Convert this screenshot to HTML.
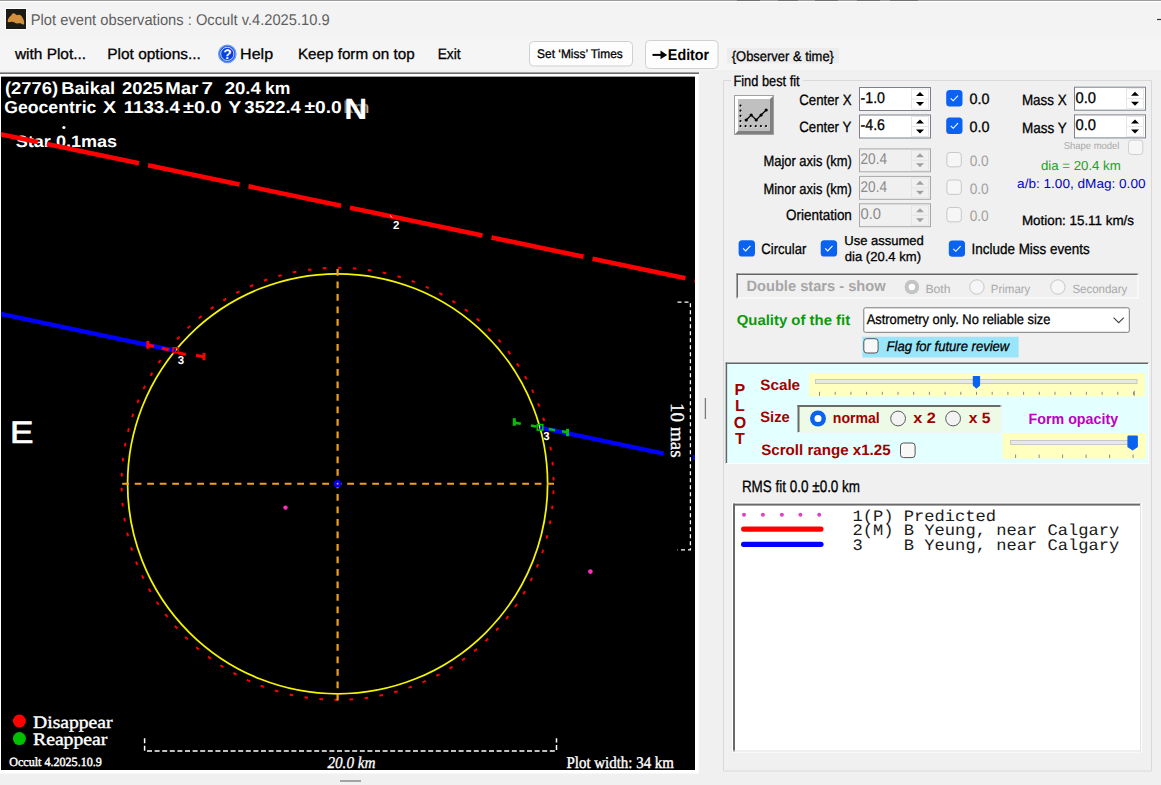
<!DOCTYPE html><html><head><meta charset="utf-8"><title>Plot event observations</title>
<style>html,body{margin:0;padding:0;background:#f0f0f0;overflow:hidden}svg{display:block}text{white-space:pre}</style></head><body>
<svg width="1161" height="785" viewBox="0 0 1161 785" text-rendering="geometricPrecision">
<rect x="0" y="0" width="1161" height="785" fill="#f0f0f0" />
<rect x="0" y="0" width="1161" height="39" fill="#f3f3f3" />
<line x1="0" y1="0.5" x2="1161" y2="0.5" stroke="#9c9c9c" stroke-width="1" />
<rect x="0" y="1" width="1161" height="1" fill="#ffffff" />
<rect x="737" y="0" width="23" height="1" fill="#707070" />
<rect x="778" y="0" width="20" height="1" fill="#707070" />
<rect x="815" y="0" width="23" height="1" fill="#707070" />
<rect x="857" y="0" width="23" height="1" fill="#707070" />
<rect x="890" y="0" width="28" height="1" fill="#707070" />
<rect x="0" y="39" width="1161" height="31" fill="#f5f5f5" />
<rect x="5.5" y="8.5" width="21" height="21" fill="#1c1a14" stroke="#ffffff" stroke-width="1" />
<path d="M7.6 21.2 C7.8 18.6 9.6 16.6 11.2 15.4 C12 13.8 13.2 12.8 14.4 13.4 C15.6 13.9 16.4 15 17.4 15.2 C18.6 14.6 20.4 14.8 21.4 16 C22.8 17.6 24.4 20.6 24.2 23.4 C24 25 22.6 24.6 21.4 23.8 C20 23 18.6 23.4 17.2 23.6 C15.4 23.4 13.6 21.6 11.6 21.8 C10 22 8 23 7.6 21.2 Z" fill="#d3913f"/>
<text x="30.8" y="25" font-size="15.5" font-family='"Liberation Sans", sans-serif' fill="#5e5e5e" textLength="298.9" lengthAdjust="spacingAndGlyphs" >Plot event observations : Occult v.4.2025.10.9</text>
<line x1="1157" y1="19.5" x2="1161" y2="19.5" stroke="#333" stroke-width="1.2" />
<text x="14.92" y="58.7" font-size="15" font-family='"Liberation Sans", sans-serif' stroke="#000" stroke-width="0.3" fill="#000" textLength="71.19" lengthAdjust="spacingAndGlyphs" >with Plot...</text>
<text x="107.23" y="58.7" font-size="15" font-family='"Liberation Sans", sans-serif' stroke="#000" stroke-width="0.3" fill="#000" textLength="93.68" lengthAdjust="spacingAndGlyphs" >Plot options...</text>
<circle cx="227.3" cy="53.9" r="8.6" fill="#1a55e0" stroke="#6a9af2" stroke-width="1.4"/>
<circle cx="227.3" cy="53.9" r="6.6" fill="#0a3fd8" stroke="#d8e8ff" stroke-width="0.9"/>
<text x="223.2" y="59" font-size="13.8" font-family='"Liberation Sans", sans-serif' font-weight="700" fill="#ffffff" >?</text>
<text x="240.08" y="58.7" font-size="15" font-family='"Liberation Sans", sans-serif' stroke="#000" stroke-width="0.3" fill="#000" textLength="32.99" lengthAdjust="spacingAndGlyphs" >Help</text>
<text x="297.95" y="58.7" font-size="15" font-family='"Liberation Sans", sans-serif' stroke="#000" stroke-width="0.3" fill="#000" textLength="116.69" lengthAdjust="spacingAndGlyphs" >Keep form on top</text>
<text x="437.67" y="58.7" font-size="15" font-family='"Liberation Sans", sans-serif' stroke="#000" stroke-width="0.3" fill="#000" textLength="22.93" lengthAdjust="spacingAndGlyphs" >Exit</text>
<rect x="529.5" y="41.5" width="103" height="24.5" fill="#fdfdfd" stroke="#d0d0d0" stroke-width="1" rx="4" />
<text x="537.07" y="57.7" font-size="12.5" font-family='"Liberation Sans", sans-serif' stroke="#000" stroke-width="0.3" fill="#000" textLength="85.66" lengthAdjust="spacingAndGlyphs" >Set ‘Miss’ Times</text>
<rect x="645.5" y="40.5" width="72.5" height="28" fill="#fdfdfd" stroke="#d0d0d0" stroke-width="1" rx="4" />
<path d="M652.5 54.9 H663" stroke="#000" stroke-width="2"/><path d="M660.5 50.6 L667.2 54.9 L660.5 59.2 Z" fill="#000"/>
<text x="667.84" y="60.4" font-size="15.5" font-family='"Liberation Sans", sans-serif' font-weight="700" fill="#000" textLength="41.37" lengthAdjust="spacingAndGlyphs" >Editor</text>
<rect x="727.2" y="48" width="111.7" height="15.3" fill="#ececec" />
<text x="731.79" y="61.2" font-size="14" font-family='"Liberation Sans", sans-serif' stroke="#000" stroke-width="0.3" fill="#000" textLength="102.15" lengthAdjust="spacingAndGlyphs" >{Observer &amp; time}</text>
<rect x="0" y="72" width="699" height="1" fill="#a0a0a0" />
<rect x="0" y="73" width="699" height="1" fill="#6a6a6a" />
<rect x="0" y="74" width="699" height="2" fill="#ffffff" />
<rect x="0" y="76" width="695" height="1" fill="#a0a0a0" />
<rect x="0" y="76" width="1" height="697" fill="#ffffff" />
<rect x="1" y="77" width="694" height="693" fill="#000000" />
<rect x="695" y="74" width="3.5" height="699.5" fill="#ffffff" />
<rect x="0" y="770" width="698.5" height="3.5" fill="#ffffff" />
<defs><clipPath id="pc"><rect x="1" y="77" width="694" height="693"/></clipPath></defs>
<g clip-path="url(#pc)">
<text x="4.98" y="93.6" font-size="17.2" font-family='"Liberation Sans", sans-serif' font-weight="700" fill="#ffffff" textLength="53.13" lengthAdjust="spacingAndGlyphs" >(2776)</text>
<text x="61.17" y="93.6" font-size="17.2" font-family='"Liberation Sans", sans-serif' font-weight="700" fill="#ffffff" textLength="54.02" lengthAdjust="spacingAndGlyphs" >Baikal</text>
<text x="121.96" y="93.6" font-size="17.2" font-family='"Liberation Sans", sans-serif' font-weight="700" fill="#ffffff" textLength="40.95" lengthAdjust="spacingAndGlyphs" >2025</text>
<text x="165.35" y="93.6" font-size="17.2" font-family='"Liberation Sans", sans-serif' font-weight="700" fill="#ffffff" textLength="33.13" lengthAdjust="spacingAndGlyphs" >Mar</text>
<text x="201.51" y="93.6" font-size="17.2" font-family='"Liberation Sans", sans-serif' font-weight="700" fill="#ffffff" textLength="11.5" lengthAdjust="spacingAndGlyphs" >7</text>
<text x="224.65" y="93.6" font-size="17.2" font-family='"Liberation Sans", sans-serif' font-weight="700" fill="#ffffff" textLength="36.25" lengthAdjust="spacingAndGlyphs" >20.4</text>
<text x="265.07" y="93.6" font-size="17.2" font-family='"Liberation Sans", sans-serif' font-weight="700" fill="#ffffff" textLength="25.42" lengthAdjust="spacingAndGlyphs" >km</text>
<text x="4.28" y="113.4" font-size="17.2" font-family='"Liberation Sans", sans-serif' font-weight="700" fill="#ffffff" textLength="92.14" lengthAdjust="spacingAndGlyphs" >Geocentric</text>
<text x="103.03" y="113.4" font-size="17.2" font-family='"Liberation Sans", sans-serif' font-weight="700" fill="#ffffff" textLength="13.15" lengthAdjust="spacingAndGlyphs" >X</text>
<text x="123.75" y="113.4" font-size="17.2" font-family='"Liberation Sans", sans-serif' font-weight="700" fill="#ffffff" textLength="56.05" lengthAdjust="spacingAndGlyphs" >1133.4</text>
<text x="183.13" y="113.4" font-size="17.2" font-family='"Liberation Sans", sans-serif' font-weight="700" fill="#ffffff" textLength="38.49" lengthAdjust="spacingAndGlyphs" >±0.0</text>
<text x="228.17" y="113.4" font-size="17.2" font-family='"Liberation Sans", sans-serif' font-weight="700" fill="#ffffff" textLength="13.05" lengthAdjust="spacingAndGlyphs" >Y</text>
<text x="244.38" y="113.4" font-size="17.2" font-family='"Liberation Sans", sans-serif' font-weight="700" fill="#ffffff" textLength="56.42" lengthAdjust="spacingAndGlyphs" >3522.4</text>
<text x="304.54" y="113.4" font-size="17.2" font-family='"Liberation Sans", sans-serif' font-weight="700" fill="#ffffff" textLength="37.25" lengthAdjust="spacingAndGlyphs" >±0.0</text>
<text x="343.25" y="113.4" font-size="17.2" font-family='"Liberation Sans", sans-serif' font-weight="700" fill="#ffffff" textLength="25.86" lengthAdjust="spacingAndGlyphs" >km</text>
<rect x="343.5" y="96" width="24" height="24" fill="#000000" opacity="0.55"/>
<text x="344.2" y="118.6" font-size="29.5" font-family='"Liberation Sans", sans-serif' font-weight="700" fill="#ffffff" textLength="23" lengthAdjust="spacingAndGlyphs" >N</text>
<text x="15.78" y="147.4" font-size="16.5" font-family='"Liberation Sans", sans-serif' font-weight="700" fill="#ffffff" textLength="101.36" lengthAdjust="spacingAndGlyphs" >Star 0.1mas</text>
<circle cx="337.6" cy="483.8" r="216" fill="none" stroke="#ff0000" stroke-width="2" stroke-dasharray="3.6 11.489" stroke-dashoffset="8.35"/>
<circle cx="337.6" cy="483.8" r="210" fill="none" stroke="#f5f500" stroke-width="1.75"/>
<line x1="337.6" y1="268.9" x2="337.6" y2="700.5" stroke="#f0a020" stroke-width="2.2" stroke-dasharray="6.8 5.7"/>
<line x1="122.2" y1="483.7" x2="554.5" y2="483.7" stroke="#f0a020" stroke-width="2" stroke-dasharray="6.8 5.7"/>
<line x1="-5" y1="133.05" x2="37.9" y2="142.07" stroke="#ff0000" stroke-width="4.6" />
<line x1="46.9" y1="143.96" x2="139.0" y2="163.33" stroke="#ff0000" stroke-width="4.6" />
<line x1="148.0" y1="165.22" x2="239.5" y2="184.47" stroke="#ff0000" stroke-width="4.6" />
<line x1="248.5" y1="186.36" x2="341.0" y2="205.81" stroke="#ff0000" stroke-width="4.6" />
<line x1="350.0" y1="207.7" x2="482.5" y2="235.57" stroke="#ff0000" stroke-width="4.6" />
<line x1="491.5" y1="237.46" x2="583.5" y2="256.81" stroke="#ff0000" stroke-width="4.6" />
<line x1="592.5" y1="258.7" x2="685.5" y2="278.26" stroke="#ff0000" stroke-width="4.6" />
<line x1="694.5" y1="280.15" x2="700" y2="281.31" stroke="#ff0000" stroke-width="4.6" />
<line x1="-5" y1="312.74600000000004" x2="175.7" y2="350.83756" stroke="#0000ff" stroke-width="4.3" />
<line x1="540.3" y1="427.69524" x2="663.6" y2="453.68688" stroke="#0000ff" stroke-width="4.3" />
<rect x="693" y="455" width="2" height="5" fill="#0000ff" />
<line x1="147.8" y1="340.9" x2="147.8" y2="348.8" stroke="#ff0000" stroke-width="3" />
<line x1="147.8" y1="345.2092" x2="154" y2="346.2632" stroke="#ff0000" stroke-width="3" />
<line x1="161.8" y1="348.20744" x2="168.8" y2="349.68304" stroke="#ff0000" stroke-width="3" />
<rect x="173" y="347.8" width="5" height="5" fill="none" stroke="#ff0000" stroke-width="1.5" />
<line x1="178" y1="352.8224" x2="185.8" y2="354.46664" stroke="#ff0000" stroke-width="3" />
<line x1="196" y1="355.2" x2="203.5" y2="356.8" stroke="#ff0000" stroke-width="3" />
<line x1="204" y1="352.8" x2="204" y2="360.3" stroke="#ff0000" stroke-width="3" />
<line x1="514.3" y1="418.2" x2="514.3" y2="425.8" stroke="#00c000" stroke-width="3" />
<line x1="514.3" y1="422.6" x2="520.8" y2="423.8" stroke="#00c000" stroke-width="2.6" />
<line x1="531" y1="425.4" x2="536.4" y2="426.6" stroke="#00c000" stroke-width="2.6" />
<rect x="537.3" y="424.6" width="5.5" height="5.5" fill="none" stroke="#00c000" stroke-width="1.6" />
<line x1="548.8" y1="429" x2="555" y2="430.3" stroke="#00c000" stroke-width="2.6" />
<line x1="562" y1="431.2" x2="567.5" y2="432.3" stroke="#00c000" stroke-width="2.6" />
<line x1="567.5" y1="428.8" x2="567.5" y2="436.2" stroke="#00c000" stroke-width="3" />
<text x="177.8" y="363.8" font-size="11.5" font-family='"Liberation Sans", sans-serif' font-weight="700" fill="#ffffff" >3</text>
<text x="543.2" y="440" font-size="11.5" font-family='"Liberation Sans", sans-serif' font-weight="700" fill="#ffffff" >3</text>
<text x="393" y="229" font-size="11.5" font-family='"Liberation Sans", sans-serif' font-weight="700" fill="#ffffff" >2</text>
<line x1="390.2" y1="215.3" x2="392" y2="217.5" stroke="#ffffff" stroke-width="1" />
<circle cx="285.5" cy="507.6" r="2.2" fill="#ff30c0"/>
<circle cx="590.4" cy="571.6" r="2.3" fill="#ff30c0"/>
<circle cx="337.6" cy="483.8" r="3.8" fill="#0000ff"/>
<circle cx="337.6" cy="483.8" r="1" fill="#f0a020"/>
<circle cx="63.9" cy="127.5" r="1.6" fill="#fffff0"/>
<text x="9.9" y="443.1" font-size="31" font-family='"Liberation Sans", sans-serif' stroke="#ffffff" stroke-width="0.7" fill="#ffffff" textLength="23.5" lengthAdjust="spacingAndGlyphs" >E</text>
<path d="M677.5 302.2 H690.4 V549.9 H677.5" fill="none" stroke="#ffffff" stroke-width="1.3" stroke-dasharray="4 3"/>
<text transform="translate(670.6,403.1) rotate(90)" x="0" y="0" font-size="19.5" font-family='"Liberation Serif", serif' fill="#ffffff" stroke="#ffffff" stroke-width="0.3" textLength="54.5" lengthAdjust="spacingAndGlyphs">10 mas</text>
<circle cx="19.4" cy="721" r="6.5" fill="#ff0000"/>
<circle cx="19.4" cy="738.6" r="6.5" fill="#00c000"/>
<text x="33.03" y="728" font-size="17.5" font-family='"Liberation Serif", serif' stroke="#ffffff" stroke-width="0.4" fill="#ffffff" textLength="79.54" lengthAdjust="spacingAndGlyphs" >Disappear</text>
<text x="33.03" y="745" font-size="17.5" font-family='"Liberation Serif", serif' stroke="#ffffff" stroke-width="0.4" fill="#ffffff" textLength="74.34" lengthAdjust="spacingAndGlyphs" >Reappear</text>
<text x="9.31" y="765.5" font-size="12.5" font-family='"Liberation Serif", serif' stroke="#ffffff" stroke-width="0.45" fill="#ffffff" textLength="92.49" lengthAdjust="spacingAndGlyphs" >Occult 4.2025.10.9</text>
<path d="M144.6 738.2 V751 H556.5 V738.2" fill="none" stroke="#ffffff" stroke-width="1.5" stroke-dasharray="5 2.6"/>
<text x="327.39" y="767.7" font-size="16.5" font-family='"Liberation Serif", serif' stroke="#ffffff" stroke-width="0.3" font-style="italic" fill="#ffffff" textLength="48.15" lengthAdjust="spacingAndGlyphs" >20.0 km</text>
<text x="566.57" y="767.7" font-size="16.5" font-family='"Liberation Serif", serif' stroke="#ffffff" stroke-width="0.4" fill="#ffffff" textLength="107.36" lengthAdjust="spacingAndGlyphs" >Plot width: 34 km</text>
</g>
<line x1="705.4" y1="398" x2="705.4" y2="419" stroke="#7a7a7a" stroke-width="1.3" />
<line x1="340" y1="781" x2="361" y2="781" stroke="#8a8a8a" stroke-width="1.5" />
<path d="M731 80.5 H723.5 V771 H1151.5 V80.5 H803" fill="none" stroke="#d9d9d9" stroke-width="1"/>
<text x="733.45" y="86" font-size="15" font-family='"Liberation Sans", sans-serif' stroke="#000" stroke-width="0.3" fill="#000" textLength="66.25" lengthAdjust="spacingAndGlyphs" >Find best fit</text>
<rect x="734" y="95" width="40" height="40" fill="#a0a0a0" />
<rect x="735" y="96" width="38" height="38" fill="#ffffff" />
<path d="M773 96 V134 H735 L738 131 H770 V99 Z" fill="#808080"/>
<rect x="738" y="99" width="32" height="32" fill="#c0c0c0" />
<circle cx="741" cy="106.1" r="1.1" fill="#ffffff"/><circle cx="740.5" cy="105.6" r="1.1" fill="#000"/>
<circle cx="741" cy="111.2" r="1.1" fill="#ffffff"/><circle cx="740.5" cy="110.7" r="1.1" fill="#000"/>
<circle cx="741" cy="116.3" r="1.1" fill="#ffffff"/><circle cx="740.5" cy="115.8" r="1.1" fill="#000"/>
<circle cx="741" cy="121.5" r="1.1" fill="#ffffff"/><circle cx="740.5" cy="121" r="1.1" fill="#000"/>
<circle cx="741" cy="126.6" r="1.1" fill="#ffffff"/><circle cx="740.5" cy="126.1" r="1.1" fill="#000"/>
<circle cx="746.1" cy="126.6" r="1.1" fill="#ffffff"/><circle cx="745.6" cy="126.1" r="1.1" fill="#000"/>
<circle cx="751.2" cy="126.6" r="1.1" fill="#ffffff"/><circle cx="750.7" cy="126.1" r="1.1" fill="#000"/>
<circle cx="756.3" cy="126.6" r="1.1" fill="#ffffff"/><circle cx="755.8" cy="126.1" r="1.1" fill="#000"/>
<circle cx="761.4" cy="126.6" r="1.1" fill="#ffffff"/><circle cx="760.9" cy="126.1" r="1.1" fill="#000"/>
<circle cx="766.5" cy="126.6" r="1.1" fill="#ffffff"/><circle cx="766" cy="126.1" r="1.1" fill="#000"/>
<polyline points="746.2,120 751.2,115 756.2,120 761.1,115 766.2,110" fill="none" stroke="#000" stroke-width="1.2"/>
<circle cx="746.2" cy="120" r="1.6" fill="#000"/>
<circle cx="751.2" cy="115" r="1.6" fill="#000"/>
<circle cx="756.2" cy="120" r="1.6" fill="#000"/>
<circle cx="761.1" cy="115" r="1.6" fill="#000"/>
<circle cx="766.2" cy="110" r="1.6" fill="#000"/>
<text x="799.23" y="105" font-size="15" font-family='"Liberation Sans", sans-serif' stroke="#000" stroke-width="0.3" fill="#000" textLength="52.25" lengthAdjust="spacingAndGlyphs" >Center X</text>
<rect x="859.5" y="87.5" width="71" height="23" fill="#ffffff" stroke="#7b808c" stroke-width="1" />
<rect x="911.5" y="89" width="17" height="20" fill="none" stroke="#e6e6e6" stroke-width="1" />
<line x1="911.5" y1="99.0" x2="928.5" y2="99.0" stroke="#e6e6e6" stroke-width="1" />
<path d="M916.0 96.0 L920.0 92.0 L924.0 96.0 Z" fill="#000000"/>
<path d="M916.0 102.0 L920.0 106.0 L924.0 102.0 Z" fill="#000000"/>
<text x="860.5" y="102.8" font-size="15.5" font-family='"Liberation Sans", sans-serif' stroke="#000000" stroke-width="0.3" fill="#000000" textLength="24.5" lengthAdjust="spacingAndGlyphs" >-1.0</text>
<text x="799.23" y="132" font-size="15" font-family='"Liberation Sans", sans-serif' stroke="#000" stroke-width="0.3" fill="#000" textLength="52.06" lengthAdjust="spacingAndGlyphs" >Center Y</text>
<rect x="859.5" y="115.0" width="71" height="23.0" fill="#ffffff" stroke="#7b808c" stroke-width="1" />
<rect x="911.5" y="116.5" width="17" height="20.0" fill="none" stroke="#e6e6e6" stroke-width="1" />
<line x1="911.5" y1="126.5" x2="928.5" y2="126.5" stroke="#e6e6e6" stroke-width="1" />
<path d="M916.0 123.5 L920.0 119.5 L924.0 123.5 Z" fill="#000000"/>
<path d="M916.0 129.5 L920.0 133.5 L924.0 129.5 Z" fill="#000000"/>
<text x="860.5" y="130.3" font-size="15.5" font-family='"Liberation Sans", sans-serif' stroke="#000000" stroke-width="0.3" fill="#000000" textLength="24.5" lengthAdjust="spacingAndGlyphs" >-4.6</text>
<rect x="946.2" y="90.1" width="16.3" height="16.3" fill="#0a63f0" rx="3.5" />
<path d="M950.7 98.3 L953.2 100.8 L958.0 95.69999999999999" fill="none" stroke="#ffffff" stroke-width="1.1"/>
<rect x="946.2" y="117.6" width="16.3" height="16.3" fill="#0a63f0" rx="3.5" />
<path d="M950.7 125.8 L953.2 128.29999999999998 L958.0 123.19999999999999" fill="none" stroke="#ffffff" stroke-width="1.1"/>
<text x="969.44" y="104" font-size="15" font-family='"Liberation Sans", sans-serif' stroke="#000" stroke-width="0.3" fill="#000" textLength="20.03" lengthAdjust="spacingAndGlyphs" >0.0</text>
<text x="969.44" y="131.5" font-size="15" font-family='"Liberation Sans", sans-serif' stroke="#000" stroke-width="0.3" fill="#000" textLength="20.03" lengthAdjust="spacingAndGlyphs" >0.0</text>
<text x="1021.9" y="105" font-size="15" font-family='"Liberation Sans", sans-serif' stroke="#000" stroke-width="0.3" fill="#000" textLength="44.78" lengthAdjust="spacingAndGlyphs" >Mass X</text>
<rect x="1074.5" y="87.2" width="71" height="23.0" fill="#ffffff" stroke="#7b808c" stroke-width="1" />
<rect x="1126.5" y="88.7" width="17" height="20.0" fill="none" stroke="#e6e6e6" stroke-width="1" />
<line x1="1126.5" y1="98.7" x2="1143.5" y2="98.7" stroke="#e6e6e6" stroke-width="1" />
<path d="M1131.0 95.7 L1135.0 91.7 L1139.0 95.7 Z" fill="#000000"/>
<path d="M1131.0 101.7 L1135.0 105.7 L1139.0 101.7 Z" fill="#000000"/>
<text x="1075.5" y="102.5" font-size="15.5" font-family='"Liberation Sans", sans-serif' stroke="#000000" stroke-width="0.3" fill="#000000" textLength="20.5" lengthAdjust="spacingAndGlyphs" >0.0</text>
<text x="1021.9" y="132.5" font-size="15" font-family='"Liberation Sans", sans-serif' stroke="#000" stroke-width="0.3" fill="#000" textLength="44.8" lengthAdjust="spacingAndGlyphs" >Mass Y</text>
<rect x="1074.5" y="114.9" width="71" height="23.0" fill="#ffffff" stroke="#7b808c" stroke-width="1" />
<rect x="1126.5" y="116.4" width="17" height="20.0" fill="none" stroke="#e6e6e6" stroke-width="1" />
<line x1="1126.5" y1="126.4" x2="1143.5" y2="126.4" stroke="#e6e6e6" stroke-width="1" />
<path d="M1131.0 123.4 L1135.0 119.4 L1139.0 123.4 Z" fill="#000000"/>
<path d="M1131.0 129.4 L1135.0 133.4 L1139.0 129.4 Z" fill="#000000"/>
<text x="1075.5" y="130.20000000000002" font-size="15.5" font-family='"Liberation Sans", sans-serif' stroke="#000000" stroke-width="0.3" fill="#000000" textLength="20.5" lengthAdjust="spacingAndGlyphs" >0.0</text>
<text x="1063.77" y="149.3" font-size="10" font-family='"Liberation Sans", sans-serif' fill="#a8a8a8" textLength="55.66" lengthAdjust="spacingAndGlyphs" >Shape model</text>
<rect x="1128.5" y="140.2" width="14.3" height="14.3" fill="#f6f6f6" stroke="#cfcfcf" stroke-width="1" rx="3" />
<text x="763.44" y="166.4" font-size="15" font-family='"Liberation Sans", sans-serif' stroke="#000" stroke-width="0.3" fill="#000" textLength="88.36" lengthAdjust="spacingAndGlyphs" >Major axis (km)</text>
<rect x="859.5" y="148.9" width="71" height="22.900000000000006" fill="#f0f0f0" stroke="#a8a8a8" stroke-width="1" />
<rect x="911.5" y="150.4" width="17" height="19.900000000000006" fill="none" stroke="#e4e4e4" stroke-width="1" />
<line x1="911.5" y1="160.35000000000002" x2="928.5" y2="160.35000000000002" stroke="#e4e4e4" stroke-width="1" />
<path d="M916.0 157.35000000000002 L920.0 153.35000000000002 L924.0 157.35000000000002 Z" fill="#a0a0a0"/>
<path d="M916.0 163.35000000000002 L920.0 167.35000000000002 L924.0 163.35000000000002 Z" fill="#a0a0a0"/>
<text x="860.5" y="164.10000000000002" font-size="15.5" font-family='"Liberation Sans", sans-serif' fill="#8a8a8a" textLength="26.5" lengthAdjust="spacingAndGlyphs" >20.4</text>
<text x="763.44" y="193.8" font-size="15" font-family='"Liberation Sans", sans-serif' stroke="#000" stroke-width="0.3" fill="#000" textLength="88.36" lengthAdjust="spacingAndGlyphs" >Minor axis (km)</text>
<rect x="859.5" y="176.4" width="71" height="22.900000000000006" fill="#f0f0f0" stroke="#a8a8a8" stroke-width="1" />
<rect x="911.5" y="177.9" width="17" height="19.900000000000006" fill="none" stroke="#e4e4e4" stroke-width="1" />
<line x1="911.5" y1="187.85000000000002" x2="928.5" y2="187.85000000000002" stroke="#e4e4e4" stroke-width="1" />
<path d="M916.0 184.85000000000002 L920.0 180.85000000000002 L924.0 184.85000000000002 Z" fill="#a0a0a0"/>
<path d="M916.0 190.85000000000002 L920.0 194.85000000000002 L924.0 190.85000000000002 Z" fill="#a0a0a0"/>
<text x="860.5" y="191.60000000000002" font-size="15.5" font-family='"Liberation Sans", sans-serif' fill="#8a8a8a" textLength="26.5" lengthAdjust="spacingAndGlyphs" >20.4</text>
<text x="785.96" y="220.2" font-size="15" font-family='"Liberation Sans", sans-serif' stroke="#000" stroke-width="0.3" fill="#000" textLength="65.91" lengthAdjust="spacingAndGlyphs" >Orientation</text>
<rect x="859.5" y="203.8" width="71" height="22.899999999999977" fill="#f0f0f0" stroke="#a8a8a8" stroke-width="1" />
<rect x="911.5" y="205.3" width="17" height="19.899999999999977" fill="none" stroke="#e4e4e4" stroke-width="1" />
<line x1="911.5" y1="215.25" x2="928.5" y2="215.25" stroke="#e4e4e4" stroke-width="1" />
<path d="M916.0 212.25 L920.0 208.25 L924.0 212.25 Z" fill="#a0a0a0"/>
<path d="M916.0 218.25 L920.0 222.25 L924.0 218.25 Z" fill="#a0a0a0"/>
<text x="860.5" y="219.0" font-size="15.5" font-family='"Liberation Sans", sans-serif' fill="#8a8a8a" textLength="20.5" lengthAdjust="spacingAndGlyphs" >0.0</text>
<rect x="946.9" y="152.5" width="14.4" height="14.4" fill="#f6f6f6" stroke="#c8c8c8" stroke-width="1" rx="3" />
<rect x="946.9" y="180.0" width="14.4" height="14.4" fill="#f6f6f6" stroke="#c8c8c8" stroke-width="1" rx="3" />
<rect x="946.9" y="207.5" width="14.4" height="14.4" fill="#f6f6f6" stroke="#c8c8c8" stroke-width="1" rx="3" />
<text x="969.66" y="166" font-size="15" font-family='"Liberation Sans", sans-serif' fill="#a0a0a0" textLength="19.07" lengthAdjust="spacingAndGlyphs" >0.0</text>
<text x="969.66" y="193.5" font-size="15" font-family='"Liberation Sans", sans-serif' fill="#a0a0a0" textLength="19.07" lengthAdjust="spacingAndGlyphs" >0.0</text>
<text x="969.66" y="221" font-size="15" font-family='"Liberation Sans", sans-serif' fill="#a0a0a0" textLength="19.07" lengthAdjust="spacingAndGlyphs" >0.0</text>
<text x="1040.94" y="170" font-size="13" font-family='"Liberation Sans", sans-serif' fill="#22a022" textLength="79.83" lengthAdjust="spacingAndGlyphs" >dia = 20.4 km</text>
<text x="1017.12" y="188" font-size="13" font-family='"Liberation Sans", sans-serif' fill="#0000d0" textLength="128.41" lengthAdjust="spacingAndGlyphs" >a/b: 1.00, dMag: 0.00</text>
<text x="1021.91" y="224.8" font-size="13.5" font-family='"Liberation Sans", sans-serif' stroke="#000" stroke-width="0.3" fill="#000" textLength="112.07" lengthAdjust="spacingAndGlyphs" >Motion: 15.11 km/s</text>
<rect x="738.6" y="240.2" width="16.4" height="16.4" fill="#0a63f0" rx="3.5" />
<path d="M743.1 248.39999999999998 L745.6 250.89999999999998 L750.4 245.79999999999998" fill="none" stroke="#ffffff" stroke-width="1.1"/>
<text x="761.34" y="253.8" font-size="15" font-family='"Liberation Sans", sans-serif' stroke="#000" stroke-width="0.3" fill="#000" textLength="44.98" lengthAdjust="spacingAndGlyphs" >Circular</text>
<rect x="820.7" y="240.2" width="16.4" height="16.4" fill="#0a63f0" rx="3.5" />
<path d="M825.2 248.39999999999998 L827.7 250.89999999999998 L832.5 245.79999999999998" fill="none" stroke="#ffffff" stroke-width="1.1"/>
<text x="844.3" y="244.9" font-size="13" font-family='"Liberation Sans", sans-serif' stroke="#000" stroke-width="0.3" fill="#000" textLength="79.54" lengthAdjust="spacingAndGlyphs" >Use assumed</text>
<text x="844.75" y="261" font-size="13" font-family='"Liberation Sans", sans-serif' stroke="#000" stroke-width="0.3" fill="#000" textLength="76.26" lengthAdjust="spacingAndGlyphs" >dia (20.4 km)</text>
<rect x="948.8" y="240.6" width="16.2" height="16.2" fill="#0a63f0" rx="3.5" />
<path d="M953.3 248.79999999999998 L955.8 251.29999999999998 L960.5999999999999 246.2" fill="none" stroke="#ffffff" stroke-width="1.1"/>
<text x="971.56" y="254" font-size="15" font-family='"Liberation Sans", sans-serif' stroke="#000" stroke-width="0.3" fill="#000" textLength="118.13" lengthAdjust="spacingAndGlyphs" >Include Miss events</text>
<rect x="736.5" y="273.5" width="402" height="25" fill="#f0f0f0" />
<line x1="736.5" y1="274.2" x2="1138.5" y2="274.2" stroke="#646464" stroke-width="1.5" />
<line x1="737.2" y1="273.5" x2="737.2" y2="298.5" stroke="#646464" stroke-width="1.5" />
<line x1="736.5" y1="298" x2="1138.5" y2="298" stroke="#ffffff" stroke-width="1" />
<line x1="1138" y1="273.5" x2="1138" y2="298.5" stroke="#ffffff" stroke-width="1" />
<text x="746.42" y="291.3" font-size="15" font-family='"Liberation Sans", sans-serif' font-weight="700" fill="#a6a6a6" textLength="139.25" lengthAdjust="spacingAndGlyphs" >Double stars - show</text>
<circle cx="911.9" cy="287" r="7.3" fill="#c4c4c4"/><circle cx="911.9" cy="287" r="3.2" fill="#ffffff"/>
<text x="925.4" y="292.8" font-size="12" font-family='"Liberation Sans", sans-serif' fill="#a8a8a8" textLength="25.09" lengthAdjust="spacingAndGlyphs" >Both</text>
<circle cx="976.9" cy="287" r="7.2" fill="#f6f6f6" stroke="#c8c8c8" stroke-width="1"/>
<text x="990.86" y="292.8" font-size="12" font-family='"Liberation Sans", sans-serif' fill="#a8a8a8" textLength="39.46" lengthAdjust="spacingAndGlyphs" >Primary</text>
<circle cx="1057.9" cy="287" r="7.2" fill="#f6f6f6" stroke="#c8c8c8" stroke-width="1"/>
<text x="1072.38" y="292.8" font-size="12" font-family='"Liberation Sans", sans-serif' fill="#a8a8a8" textLength="54.94" lengthAdjust="spacingAndGlyphs" >Secondary</text>
<text x="736.69" y="325" font-size="14.5" font-family='"Liberation Sans", sans-serif' font-weight="700" fill="#0a9a0a" textLength="113.49" lengthAdjust="spacingAndGlyphs" >Quality of the fit</text>
<rect x="863.8" y="307.8" width="265.5" height="24.5" fill="#ffffff" stroke="#7a7a7a" stroke-width="1" rx="1.5" />
<text x="866.67" y="323.8" font-size="14" font-family='"Liberation Sans", sans-serif' stroke="#000" stroke-width="0.3" fill="#000" textLength="183.79" lengthAdjust="spacingAndGlyphs" >Astrometry only. No reliable size</text>
<path d="M1113.6 317.6 L1118.7 322.7 L1123.8 317.6" fill="none" stroke="#404040" stroke-width="1.1"/>
<rect x="862.4" y="336.7" width="156.2" height="20.8" fill="#99e6fa" />
<rect x="863.8" y="338.7" width="14.3" height="14.3" fill="#f8f8f8" stroke="#555555" stroke-width="1" rx="3" />
<text x="886.6" y="350.9" font-size="14" font-family='"Liberation Sans", sans-serif' stroke="#000" stroke-width="0.3" font-style="italic" fill="#000" textLength="122.7" lengthAdjust="spacingAndGlyphs" >Flag for future review</text>
<rect x="725.7" y="362.6" width="423.3" height="101.4" fill="#e4ffff" />
<line x1="725.7" y1="363.3" x2="1149" y2="363.3" stroke="#646464" stroke-width="1.5" />
<line x1="726.4" y1="362.6" x2="726.4" y2="464" stroke="#646464" stroke-width="1.5" />
<line x1="725.7" y1="463.5" x2="1149" y2="463.5" stroke="#ffffff" stroke-width="1" />
<line x1="1148.5" y1="362.6" x2="1148.5" y2="464" stroke="#ffffff" stroke-width="1" />
<text x="739.9" y="395.2" font-size="16" font-family='"Liberation Sans", sans-serif' font-weight="700" fill="#a00000" text-anchor="middle" >P</text>
<text x="739.9" y="411.4" font-size="16" font-family='"Liberation Sans", sans-serif' font-weight="700" fill="#a00000" text-anchor="middle" >L</text>
<text x="739.9" y="427.59999999999997" font-size="16" font-family='"Liberation Sans", sans-serif' font-weight="700" fill="#a00000" text-anchor="middle" >O</text>
<text x="739.9" y="443.79999999999995" font-size="16" font-family='"Liberation Sans", sans-serif' font-weight="700" fill="#a00000" text-anchor="middle" >T</text>
<text x="760.26" y="390" font-size="15" font-family='"Liberation Sans", sans-serif' font-weight="700" fill="#a00000" textLength="39.86" lengthAdjust="spacingAndGlyphs" >Scale</text>
<rect x="809" y="373" width="136" height="23.4" fill="#ffffc0" />
<rect x="936" y="373" width="209" height="23.4" fill="#ffffc0" />
<rect x="815.5" y="379.5" width="321.5" height="4" fill="#e7e9e9" stroke="#c8c8c8" stroke-width="1" />
<line x1="819.5" y1="391.8" x2="819.5" y2="395.8" stroke="#8a8a8a" stroke-width="1" />
<line x1="835.2" y1="391.8" x2="835.2" y2="394.8" stroke="#8a8a8a" stroke-width="1" />
<line x1="850.9" y1="391.8" x2="850.9" y2="394.8" stroke="#8a8a8a" stroke-width="1" />
<line x1="866.6" y1="391.8" x2="866.6" y2="394.8" stroke="#8a8a8a" stroke-width="1" />
<line x1="882.3" y1="391.8" x2="882.3" y2="394.8" stroke="#8a8a8a" stroke-width="1" />
<line x1="898.0" y1="391.8" x2="898.0" y2="394.8" stroke="#8a8a8a" stroke-width="1" />
<line x1="913.7" y1="391.8" x2="913.7" y2="394.8" stroke="#8a8a8a" stroke-width="1" />
<line x1="929.4" y1="391.8" x2="929.4" y2="394.8" stroke="#8a8a8a" stroke-width="1" />
<line x1="945.1" y1="391.8" x2="945.1" y2="394.8" stroke="#8a8a8a" stroke-width="1" />
<line x1="960.8" y1="391.8" x2="960.8" y2="394.8" stroke="#8a8a8a" stroke-width="1" />
<line x1="976.5" y1="391.8" x2="976.5" y2="394.8" stroke="#8a8a8a" stroke-width="1" />
<line x1="992.2" y1="391.8" x2="992.2" y2="394.8" stroke="#8a8a8a" stroke-width="1" />
<line x1="1007.9" y1="391.8" x2="1007.9" y2="394.8" stroke="#8a8a8a" stroke-width="1" />
<line x1="1023.6" y1="391.8" x2="1023.6" y2="394.8" stroke="#8a8a8a" stroke-width="1" />
<line x1="1039.3" y1="391.8" x2="1039.3" y2="394.8" stroke="#8a8a8a" stroke-width="1" />
<line x1="1055.0" y1="391.8" x2="1055.0" y2="394.8" stroke="#8a8a8a" stroke-width="1" />
<line x1="1070.7" y1="391.8" x2="1070.7" y2="394.8" stroke="#8a8a8a" stroke-width="1" />
<line x1="1086.4" y1="391.8" x2="1086.4" y2="394.8" stroke="#8a8a8a" stroke-width="1" />
<line x1="1102.1" y1="391.8" x2="1102.1" y2="394.8" stroke="#8a8a8a" stroke-width="1" />
<line x1="1117.8" y1="391.8" x2="1117.8" y2="394.8" stroke="#8a8a8a" stroke-width="1" />
<line x1="1133.5" y1="391.8" x2="1133.5" y2="394.8" stroke="#8a8a8a" stroke-width="1" />
<line x1="1134.3" y1="390.8" x2="1134.3" y2="395.8" stroke="#8a8a8a" stroke-width="1" />
<path d="M972.8 376.5 Q972.8 375.9 973.5 375.9 H979.4 Q980.1 375.9 980.1 376.5 V385.5 L976.45 388.8 L972.8 385.5 Z" fill="#0a63f0"/>
<text x="760.28" y="422.3" font-size="15" font-family='"Liberation Sans", sans-serif' font-weight="700" fill="#a00000" textLength="29.43" lengthAdjust="spacingAndGlyphs" >Size</text>
<rect x="797.5" y="405" width="204" height="28" fill="#ecfae6" />
<rect x="797.5" y="405" width="204" height="2" fill="#6a6a6a" />
<rect x="797.5" y="405" width="2" height="28" fill="#6a6a6a" />
<rect x="797.5" y="432" width="204" height="1" fill="#f4f4f4" />
<rect x="1000.5" y="405" width="1" height="28" fill="#f4f4f4" />
<circle cx="818" cy="418.5" r="8" fill="#0a63f0"/><circle cx="818" cy="418.5" r="3.5" fill="#ffffff"/>
<text x="832.77" y="422.5" font-size="15" font-family='"Liberation Sans", sans-serif' font-weight="700" fill="#a00000" textLength="47.03" lengthAdjust="spacingAndGlyphs" >normal</text>
<circle cx="898.1" cy="418.5" r="7.4" fill="#f3f3f3" stroke="#5a5a5a" stroke-width="1"/>
<text x="913.19" y="422.5" font-size="15" font-family='"Liberation Sans", sans-serif' font-weight="700" fill="#a00000" textLength="22.56" lengthAdjust="spacingAndGlyphs" >x 2</text>
<circle cx="953.1" cy="418.5" r="7.4" fill="#f3f3f3" stroke="#5a5a5a" stroke-width="1"/>
<text x="968.69" y="422.5" font-size="15" font-family='"Liberation Sans", sans-serif' font-weight="700" fill="#a00000" textLength="21.74" lengthAdjust="spacingAndGlyphs" >x 5</text>
<text x="1028.55" y="423.6" font-size="15" font-family='"Liberation Sans", sans-serif' font-weight="700" fill="#c000c0" textLength="89.53" lengthAdjust="spacingAndGlyphs" >Form opacity</text>
<text x="761.26" y="454.5" font-size="15" font-family='"Liberation Sans", sans-serif' font-weight="700" fill="#a00000" textLength="129.36" lengthAdjust="spacingAndGlyphs" >Scroll range x1.25</text>
<rect x="900.5" y="443.0" width="14.6" height="14.6" fill="#f8f8f8" stroke="#555555" stroke-width="1" rx="3" />
<rect x="1002.6" y="433" width="143.3" height="25.5" fill="#ffffc0" />
<rect x="1010.5" y="440.5" width="125" height="4" fill="#e7e9e9" stroke="#c8c8c8" stroke-width="1" />
<line x1="1015.6" y1="454.5" x2="1015.6" y2="458" stroke="#8a8a8a" stroke-width="1" />
<line x1="1039.1" y1="454.5" x2="1039.1" y2="458" stroke="#8a8a8a" stroke-width="1" />
<line x1="1062.6" y1="454.5" x2="1062.6" y2="458" stroke="#8a8a8a" stroke-width="1" />
<line x1="1086.1" y1="454.5" x2="1086.1" y2="458" stroke="#8a8a8a" stroke-width="1" />
<line x1="1109.6" y1="454.5" x2="1109.6" y2="458" stroke="#8a8a8a" stroke-width="1" />
<line x1="1133.1" y1="454.5" x2="1133.1" y2="458" stroke="#8a8a8a" stroke-width="1" />
<path d="M1127.4 436.8 Q1127.4 435.6 1128.6 435.6 H1136.7 Q1137.9 435.6 1137.9 436.8 V447 L1132.65 450.5 L1127.4 447 Z" fill="#0a63f0"/>
<text x="741.89" y="491.5" font-size="16.5" font-family='"Liberation Sans", sans-serif' stroke="#000" stroke-width="0.3" fill="#000" textLength="118.19" lengthAdjust="spacingAndGlyphs" >RMS fit 0.0 ±0.0 km</text>
<rect x="732" y="502.5" width="410" height="250" fill="#ffffff" />
<rect x="733" y="503.6" width="408" height="2" fill="#6a6a6a" />
<rect x="733" y="503.6" width="2" height="248" fill="#6a6a6a" />
<rect x="733" y="750.5" width="408" height="1" fill="#e2e2e2" />
<rect x="1140" y="503.6" width="1" height="248" fill="#e2e2e2" />
<circle cx="744" cy="514.8" r="2" fill="#e040c8"/>
<circle cx="762.9" cy="514.8" r="2" fill="#e040c8"/>
<circle cx="781.9" cy="514.8" r="2" fill="#e040c8"/>
<circle cx="800.4" cy="514.8" r="2" fill="#e040c8"/>
<circle cx="819.2" cy="514.8" r="2" fill="#e040c8"/>
<line x1="743.6" y1="529.1" x2="821" y2="529.1" stroke="#ff0000" stroke-width="5.1" stroke-linecap="round"/>
<line x1="743.6" y1="544.3" x2="821" y2="544.3" stroke="#0000ff" stroke-width="5.2" stroke-linecap="round"/>
<text x="852.5" y="520.5" font-size="16" font-family='"Liberation Mono", monospace' fill="#1a1a1a" textLength="143.6" lengthAdjust="spacingAndGlyphs" >1(P) Predicted</text>
<text x="852.5" y="535.2" font-size="16" font-family='"Liberation Mono", monospace' fill="#1a1a1a" textLength="266.8" lengthAdjust="spacingAndGlyphs" >2(M) B Yeung, near Calgary</text>
<text x="852.5" y="549.9" font-size="16" font-family='"Liberation Mono", monospace' fill="#1a1a1a" textLength="266.8" lengthAdjust="spacingAndGlyphs" >3    B Yeung, near Calgary</text>
</svg></body></html>
